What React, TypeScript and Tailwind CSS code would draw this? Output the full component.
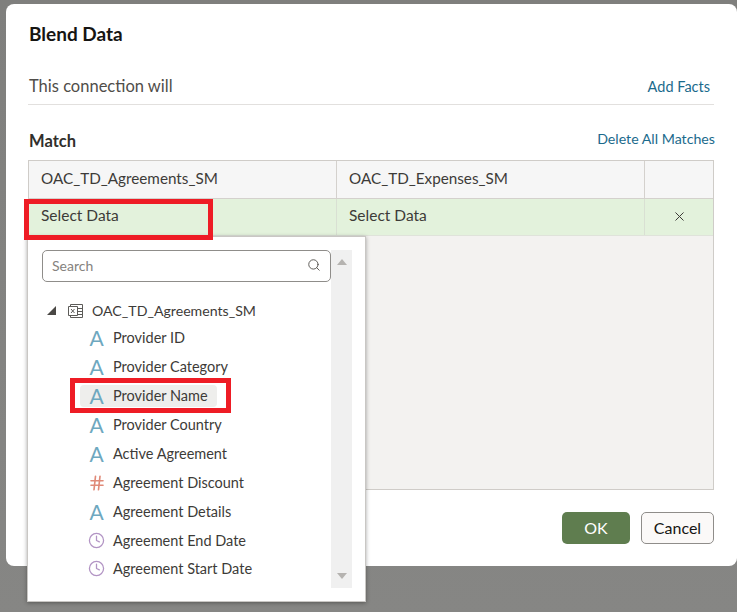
import { Clock, Hash, Search, X } from "lucide-react";

const fields = [
  { name: "Provider ID", kind: "text" },
  { name: "Provider Category", kind: "text" },
  { name: "Provider Name", kind: "text", active: true },
  { name: "Provider Country", kind: "text" },
  { name: "Active Agreement", kind: "text" },
  { name: "Agreement Discount", kind: "number" },
  { name: "Agreement Details", kind: "text" },
  { name: "Agreement End Date", kind: "date" },
  { name: "Agreement Start Date", kind: "date", last: true },
];

function FieldIcon({ kind }: { kind: string }) {
  if (kind === "number") return <Hash size={18} strokeWidth={2.2} className="text-[#e08a78]" />;
  if (kind === "date") return <Clock size={17} strokeWidth={1.8} className="text-[#b294c4]" />;
  return <span className="text-[21px] leading-none text-[#6ea8bf]">A</span>;
}

function SheetIcon() {
  return (
    <svg width="16" height="16" viewBox="0 0 16 16" fill="none" stroke="#5c5b58" strokeWidth="1">
      <path d="M2.5 3V1.5h12v13h-12V13" />
      <path d="M.5 3.5h9v9h-9zM9.5 5.5h5M9.5 8.5h5M9.5 11.5h5" />
      <path d="M3 6l3.5 4M6.5 6L3 10" />
    </svg>
  );
}

function Dropdown() {
  return (
    <div className="absolute left-[21px] top-[232px] h-[366px] w-[339px] border border-[#c9c7c4] bg-white pl-[14px] pt-[13px] shadow-[0_1px_4px_rgba(0,0,0,0.35)]">
      <div className="flex">
        <div className="w-[289px]">
          <div className="flex h-[32px] items-center justify-between rounded-[5px] border border-[#8f8d8a] pb-[2px] pl-[9px] pr-[9px] text-[14px] text-[#85827e]">
            <span>Search</span>
            <Search size={14} strokeWidth={1.6} className="text-[#55534f]" />
          </div>
          <div className="mt-[14px] flex h-[29px] items-center">
            <span className="ml-[5px] h-0 w-0 border-b-[9px] border-l-[9px] border-b-[#4a4845] border-l-transparent" />
            <span className="ml-[12px]"><SheetIcon /></span>
            <span className="ml-[8px] text-[14.15px] text-[#3d3b38]">OAC_TD_Agreements_SM</span>
          </div>
          <div className="ml-[38px] -mt-[2px]">
            {fields.map((f) => (
              <div key={f.name} className={`flex h-[29px] items-center ${f.last ? "-mt-px" : ""}`}>
                <div className={`flex h-[22px] items-center rounded-[4px] pr-[9px] ${f.active ? "bg-[#eeeeec]" : ""}`}>
                  <span className="flex w-[33px] justify-center"><FieldIcon kind={f.kind} /></span>
                  <span className="text-[14.5px] text-[#3d3b38]">{f.name}</span>
                </div>
              </div>
            ))}
          </div>
        </div>
        <div className="flex h-[338px] w-[21px] flex-col items-center justify-between bg-[#f0f0f0] py-[9px]">
          <span className="h-0 w-0 border-x-[5px] border-b-[6px] border-x-transparent border-b-[#b5b3b0]" />
          <span className="h-0 w-0 border-x-[5px] border-t-[6px] border-x-transparent border-t-[#b5b3b0]" />
        </div>
      </div>
    </div>
  );
}

export default function App() {
  return (
    <div className="h-[612px] w-[737px] overflow-hidden bg-gradient-to-b from-[#7f7f7d] to-[#868684] pl-[6px] pt-[4px] font-['Lato',sans-serif] text-[#3d3b38]">
      <div className="relative h-[562px] w-[731px] rounded-[8px] bg-white pl-[22px] pr-[23px]">
        <h1 className="pt-[19px] pl-px text-[19px] font-bold leading-[22px] text-[#161513]">Blend Data</h1>

        <div className="mt-[25px] flex h-[35px] items-center justify-between border-b border-[#e2e0de] pb-[2px]">
          <span className="pl-px text-[16.5px] text-[#4f4d49]">This connection will</span>
          <span className="pr-[4px] pt-[2px] text-[14.5px] text-[#1b6a8c]">Add Facts</span>
        </div>

        <div className="mt-[24px] flex h-[31px] items-start justify-between">
          <span className="pl-px text-[16.5px] font-bold leading-[24px] text-[#312f2c]">Match</span>
          <span className="-mr-px text-[14.2px] leading-[20px] text-[#1b6a8c]">Delete All Matches</span>
        </div>

        <div className="flex h-[330px] flex-col border border-[#cfccc8] bg-[#f3f2f0]">
          <div className="flex h-[38px] border-b border-[#d4d1cd] bg-[#f6f6f6] text-[15.25px]">
            <div className="flex w-[308px] items-center border-r border-[#d4d1cd] pb-[2px] pl-[12px]">OAC_TD_Agreements_SM</div>
            <div className="flex w-[308px] items-center border-r border-[#d4d1cd] pb-[2px] pl-[12px]">OAC_TD_Expenses_SM</div>
          </div>
          <div className="flex h-[37px] border-b border-[#dfe3da] bg-[#e3f2dc] text-[15.5px]">
            <div className="flex w-[308px] items-center border-r border-[#d9e0d3] pb-[3px] pl-[12px]">Select Data</div>
            <div className="flex w-[308px] items-center border-r border-[#d9e0d3] pb-[3px] pl-[12px]">Select Data</div>
            <div className="flex flex-1 items-center justify-center pb-[2px]"><X size={15} strokeWidth={1.6} /></div>
          </div>
        </div>

        <div className="mt-[22px] flex justify-between">
          <div className="h-[32px] w-[40px] rounded-[5px] border border-[#a8a6a2]" />
          <div className="flex gap-[11px]">
            <div className="flex h-[32px] w-[68px] items-center justify-center rounded-[5px] bg-[#5f7d4f] text-[16px] text-white">OK</div>
            <div className="flex h-[32px] w-[73px] items-center justify-center rounded-[5px] border border-[#8f8d8a] bg-[#fbf9f8] text-[16px] text-[#161513]">Cancel</div>
          </div>
        </div>

        <Dropdown />
        <div className="absolute left-[18px] top-[195px] h-[41px] w-[189px] border-[5px] border-[#ee1c25]" />
        <div className="absolute left-[64px] top-[374px] h-[35px] w-[161px] border-[5px] border-[#ee1c25]" />
      </div>
    </div>
  );
}
